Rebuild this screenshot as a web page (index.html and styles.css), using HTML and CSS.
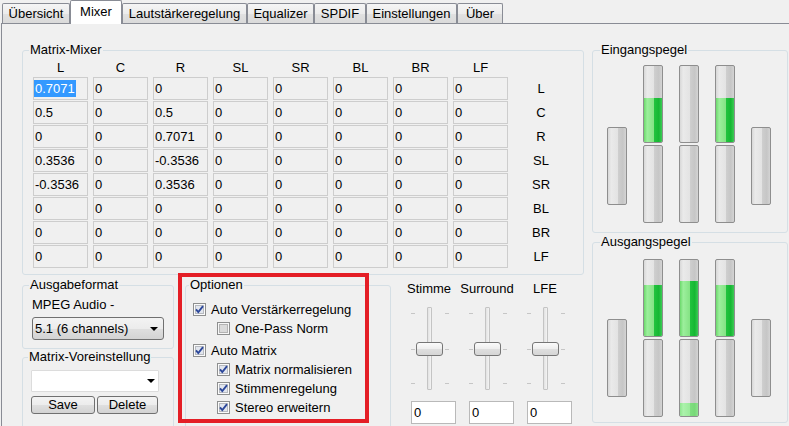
FILE: index.html
```html
<!DOCTYPE html>
<html lang="de">
<head>
<meta charset="utf-8">
<title>Mixer</title>
<link rel="stylesheet" href="styles.css">
</head>
<body>
<div class="tabs">
  <div class="tab">Übersicht</div>
  <div class="tab active">Mixer</div>
  <div class="tab">Lautstärkeregelung</div>
  <div class="tab">Equalizer</div>
  <div class="tab">SPDIF</div>
  <div class="tab">Einstellungen</div>
  <div class="tab">Über</div>
</div>
<div class="page">
  <div class="left">
    <fieldset class="group mixer">
      <legend>Matrix-Mixer</legend>
      <div class="matrix">
        <div class="hd">L</div><div class="hd">C</div><div class="hd">R</div><div class="hd">SL</div><div class="hd">SR</div><div class="hd">BL</div><div class="hd">BR</div><div class="hd">LF</div><div class="hd"></div>

        <div class="cell"><span class="sel">0.7071</span></div><div class="cell">0</div><div class="cell">0</div><div class="cell">0</div><div class="cell">0</div><div class="cell">0</div><div class="cell">0</div><div class="cell">0</div><div class="rl">L</div>
        <div class="cell">0.5</div><div class="cell">0</div><div class="cell">0.5</div><div class="cell">0</div><div class="cell">0</div><div class="cell">0</div><div class="cell">0</div><div class="cell">0</div><div class="rl">C</div>
        <div class="cell">0</div><div class="cell">0</div><div class="cell">0.7071</div><div class="cell">0</div><div class="cell">0</div><div class="cell">0</div><div class="cell">0</div><div class="cell">0</div><div class="rl">R</div>
        <div class="cell">0.3536</div><div class="cell">0</div><div class="cell">-0.3536</div><div class="cell">0</div><div class="cell">0</div><div class="cell">0</div><div class="cell">0</div><div class="cell">0</div><div class="rl">SL</div>
        <div class="cell">-0.3536</div><div class="cell">0</div><div class="cell">0.3536</div><div class="cell">0</div><div class="cell">0</div><div class="cell">0</div><div class="cell">0</div><div class="cell">0</div><div class="rl">SR</div>
        <div class="cell">0</div><div class="cell">0</div><div class="cell">0</div><div class="cell">0</div><div class="cell">0</div><div class="cell">0</div><div class="cell">0</div><div class="cell">0</div><div class="rl">BL</div>
        <div class="cell">0</div><div class="cell">0</div><div class="cell">0</div><div class="cell">0</div><div class="cell">0</div><div class="cell">0</div><div class="cell">0</div><div class="cell">0</div><div class="rl">BR</div>
        <div class="cell">0</div><div class="cell">0</div><div class="cell">0</div><div class="cell">0</div><div class="cell">0</div><div class="cell">0</div><div class="cell">0</div><div class="cell">0</div><div class="rl">LF</div>
      </div>
    </fieldset>

    <div class="lower">
      <div class="col-a">
        <fieldset class="group fmt">
          <legend>Ausgabeformat</legend>
          <div class="mpeg">MPEG Audio -</div>
          <div class="combo">
            <span>5.1 (6 channels)</span>
            <svg class="arrow" width="8" height="4" viewBox="0 0 8 4"><polygon points="0,0 8,0 4,4" fill="#000"/></svg>
          </div>
        </fieldset>
        <fieldset class="group preset">
          <legend>Matrix-Voreinstellung</legend>
          <div class="combo white">
            <span></span>
            <svg class="arrow" width="8" height="4" viewBox="0 0 8 4"><polygon points="0,0 8,0 4,4" fill="#000"/></svg>
          </div>
          <div class="btns">
            <div class="btn save">Save</div>
            <div class="btn del">Delete</div>
          </div>
        </fieldset>
      </div>

      <fieldset class="group opts">
        <legend>Optionen</legend>
        <div class="chk">
          <svg class="cb" width="13" height="13" viewBox="0 0 13 13"><rect x=".5" y=".5" width="12" height="12" fill="#fbfbfb" stroke="#8e8f8f"/><rect x="2.5" y="2.5" width="8" height="8" fill="#e2e6ee" stroke="#b7bac0"/><path d="M3 6.3 L5.3 9 L10 3.2" fill="none" stroke="#2c479a" stroke-width="1.9"/></svg>
          <span>Auto Verstärkerregelung</span>
        </div>
        <div class="chk sub">
          <svg class="cb" width="13" height="13" viewBox="0 0 13 13"><rect x=".5" y=".5" width="12" height="12" fill="#f7f7f7" stroke="#8e8f8f"/><rect x="2.5" y="2.5" width="8" height="8" fill="#dadada" stroke="#b3b3b3"/></svg>
          <span>One-Pass Norm</span>
        </div>
        <div class="chk gap">
          <svg class="cb" width="13" height="13" viewBox="0 0 13 13"><rect x=".5" y=".5" width="12" height="12" fill="#fbfbfb" stroke="#8e8f8f"/><rect x="2.5" y="2.5" width="8" height="8" fill="#e2e6ee" stroke="#b7bac0"/><path d="M3 6.3 L5.3 9 L10 3.2" fill="none" stroke="#2c479a" stroke-width="1.9"/></svg>
          <span>Auto Matrix</span>
        </div>
        <div class="chk sub">
          <svg class="cb" width="13" height="13" viewBox="0 0 13 13"><rect x=".5" y=".5" width="12" height="12" fill="#fbfbfb" stroke="#8e8f8f"/><rect x="2.5" y="2.5" width="8" height="8" fill="#e2e6ee" stroke="#b7bac0"/><path d="M3 6.3 L5.3 9 L10 3.2" fill="none" stroke="#2c479a" stroke-width="1.9"/></svg>
          <span>Matrix normalisieren</span>
        </div>
        <div class="chk sub">
          <svg class="cb" width="13" height="13" viewBox="0 0 13 13"><rect x=".5" y=".5" width="12" height="12" fill="#fbfbfb" stroke="#8e8f8f"/><rect x="2.5" y="2.5" width="8" height="8" fill="#e2e6ee" stroke="#b7bac0"/><path d="M3 6.3 L5.3 9 L10 3.2" fill="none" stroke="#2c479a" stroke-width="1.9"/></svg>
          <span>Stimmenregelung</span>
        </div>
        <div class="chk sub">
          <svg class="cb" width="13" height="13" viewBox="0 0 13 13"><rect x=".5" y=".5" width="12" height="12" fill="#fbfbfb" stroke="#8e8f8f"/><rect x="2.5" y="2.5" width="8" height="8" fill="#e2e6ee" stroke="#b7bac0"/><path d="M3 6.3 L5.3 9 L10 3.2" fill="none" stroke="#2c479a" stroke-width="1.9"/></svg>
          <span>Stereo erweitern</span>
        </div>
      </fieldset>

      <div class="sliders">
        <div class="sl">
          <div class="sl-label">Stimme</div>
          <div class="slider">
            <div class="track"></div>
            <div class="tick l t1"></div><div class="tick l t2"></div><div class="tick l t3"></div>
            <div class="tick r t1"></div><div class="tick r t2"></div><div class="tick r t3"></div>
            <div class="thumb"></div>
          </div>
          <div class="val">0</div>
        </div>
        <div class="sl">
          <div class="sl-label">Surround</div>
          <div class="slider">
            <div class="track"></div>
            <div class="tick l t1"></div><div class="tick l t2"></div><div class="tick l t3"></div>
            <div class="tick r t1"></div><div class="tick r t2"></div><div class="tick r t3"></div>
            <div class="thumb"></div>
          </div>
          <div class="val">0</div>
        </div>
        <div class="sl">
          <div class="sl-label">LFE</div>
          <div class="slider">
            <div class="track"></div>
            <div class="tick l t1"></div><div class="tick l t2"></div><div class="tick l t3"></div>
            <div class="tick r t1"></div><div class="tick r t2"></div><div class="tick r t3"></div>
            <div class="thumb"></div>
          </div>
          <div class="val">0</div>
        </div>
      </div>

      <div class="annot"></div>
    </div>
  </div>

  <div class="right">
    <fieldset class="group meters in">
      <legend>Eingangspegel</legend>
      <div class="mrow">
        <div class="seg side"></div>
        <div class="stack">
          <div class="seg"><div class="fill" style="height:58%"></div></div>
          <div class="seg"></div>
        </div>
        <div class="stack">
          <div class="seg"></div>
          <div class="seg"></div>
        </div>
        <div class="stack">
          <div class="seg"><div class="fill" style="height:58%"></div></div>
          <div class="seg"></div>
        </div>
        <div class="seg side"></div>
      </div>
    </fieldset>
    <fieldset class="group meters out">
      <legend>Ausgangspegel</legend>
      <div class="mrow">
        <div class="seg side"></div>
        <div class="stack">
          <div class="seg"><div class="fill" style="height:67%"></div></div>
          <div class="seg"></div>
        </div>
        <div class="stack">
          <div class="seg"><div class="fill" style="height:73%"></div></div>
          <div class="seg"><div class="fill light" style="height:17%"></div></div>
        </div>
        <div class="stack">
          <div class="seg"><div class="fill" style="height:67%"></div></div>
          <div class="seg"></div>
        </div>
        <div class="seg side"></div>
      </div>
    </fieldset>
  </div>
</div>
</body>
</html>
```

FILE: styles.css
```css
* { box-sizing: border-box; }
html, body { margin: 0; padding: 0; }
body {
  width: 789px;
  height: 426px;
  overflow: hidden;
  background: #f0f0f0;
  color: #000;
  font-family: "Liberation Sans", Arial, sans-serif;
  font-size: 13px;
  line-height: 16px;
}

/* ---------- tabs ---------- */
.tabs {
  display: flex;
  align-items: flex-end;
  height: 23px;
  padding-left: 2px;
}
.tab {
  height: 20px;
  border: 1px solid #898c95;
  border-bottom: none;
  border-radius: 2px 2px 0 0;
  background: linear-gradient(#f5f5f5, #ececec 50%, #e1e1e1 51%, #dadada);
  text-align: center;
  line-height: 19px;
  white-space: nowrap;
}
.tab:nth-child(1) { width: 68px; }
.tab:nth-child(2) { width: 52px; }
.tab:nth-child(3) { width: 125px; }
.tab:nth-child(4) { width: 67px; }
.tab:nth-child(5) { width: 52px; }
.tab:nth-child(6) { width: 91px; }
.tab:nth-child(7) { width: 46px; }
.tab.active {
  height: 24px;
  margin-bottom: -1px;
  position: relative;
  z-index: 1;
  background: #fff;
  line-height: 21px;
  padding-bottom: 2px;
}

/* ---------- page ---------- */
.page {
  margin-left: 1px;
  width: 790px;
  height: 410px;
  border: 1px solid #898c95;
  padding: 18px 0 0 20px;
  display: grid;
  grid-template-columns: 562px 196px;
  column-gap: 8px;
  align-items: start;
}

fieldset.group {
  margin: 0;
  border: 1px solid #d5dfe5;
  border-radius: 3px;
  min-inline-size: 0;
}
fieldset.group > legend {
  padding: 0 1px;
  line-height: 16px;
}

/* ---------- matrix ---------- */
.mixer {
  width: 562px;
  padding: 1px 14px 6px 10px;
}
.mixer > legend { margin-left: -4px; }
.matrix {
  display: grid;
  grid-template-columns: repeat(8, 55px) 56px;
  grid-template-rows: 17px repeat(8, 23px);
  column-gap: 5px;
  row-gap: 1px;
}
.hd {
  text-align: center;
  line-height: 17px;
}
.cell {
  border: 1px solid #cdcdcd;
  padding-left: 1px;
  line-height: 21px;
  white-space: nowrap;
  overflow: hidden;
}
.sel {
  display: inline-block;
  margin-left: -1px;
  padding: 0 1px;
  line-height: 17px;
  background: #3399ff;
  color: #fff;
}
.rl {
  text-align: center;
  line-height: 23px;
}

/* ---------- lower row ---------- */
.lower {
  position: relative;
  display: flex;
  align-items: flex-start;
  margin-top: 2px;
}
.col-a {
  width: 152px;
  margin-right: 11px;
}
.fmt {
  padding: 4px 9px 8px 9px;
}
.fmt > legend { margin-left: -3px; }
.mpeg { line-height: 16px; }
.combo {
  margin-top: 4px;
  width: 132px;
  height: 23px;
  display: flex;
  align-items: center;
  justify-content: space-between;
  padding: 0 5px 0 2px;
  border: 1px solid #707070;
  border-radius: 3px;
  background: linear-gradient(#f3f3f3, #ececec 50%, #dfdfdf 51%, #d3d3d3);
  white-space: nowrap;
}
.preset {
  margin-top: 2px;
  padding: 5px 12px 14px 8px;
}
.preset > legend { margin-left: -3px; }
.combo.white {
  margin-top: 0;
  width: 128px;
  height: 22px;
  padding-right: 3px;
  border: 1px solid #dcdcdc;
  border-radius: 1px;
  background: #fff;
}
.btns {
  display: flex;
  gap: 2px;
  margin-top: 4px;
}
.btn {
  height: 18px;
  border: 1px solid #707070;
  border-radius: 3px;
  background: linear-gradient(#f3f3f3, #ececec 50%, #dfdfdf 51%, #d3d3d3);
  text-align: center;
  line-height: 16px;
}
.btn.save { width: 64px; }
.btn.del { width: 61px; }

/* ---------- options ---------- */
.opts {
  width: 206px;
  padding: 7px 4px 20px 7px;
}
.opts > legend { margin-left: -4px; }
.chk {
  display: flex;
  align-items: center;
  height: 19px;
  white-space: nowrap;
}
.chk.sub { padding-left: 24px; }
.chk.gap { margin-top: 3px; }
.cb {
  flex: none;
  margin-right: 5px;
}

/* ---------- sliders ---------- */
.sliders {
  width: 193px;
  display: flex;
  padding: 4px 0 0 9px;
}
.sl {
  width: 58px;
  display: flex;
  flex-direction: column;
}
.sl-label {
  text-align: center;
  line-height: 16px;
  white-space: nowrap;
}
.slider {
  position: relative;
  width: 58px;
  height: 94px;
  margin-top: 5px;
}
.track {
  position: absolute;
  left: 27px;
  top: 5px;
  width: 5px;
  height: 83px;
  border: 1px solid #c4c4c4;
  border-radius: 1px;
  background: linear-gradient(to right, #e2e2e2, #f4f4f4);
}
.tick {
  position: absolute;
  width: 4px;
  height: 1px;
  background: #c6c6c6;
}
.tick.l { left: 11px; }
.tick.r { left: 45px; }
.tick.t1 { top: 11px; }
.tick.t2 { top: 47px; }
.tick.t3 { top: 81px; }
.thumb {
  position: absolute;
  left: 16px;
  top: 40px;
  width: 27px;
  height: 14px;
  border: 1px solid #767676;
  border-radius: 3px;
  background: linear-gradient(#fbfbfb, #eeeeee 50%, #dfdfdf 51%, #d6d6d6);
}
.val {
  margin-top: 5px;
  margin-left: 11px;
  width: 45px;
  height: 23px;
  padding-left: 2px;
  border: 1px solid #b9b9b9;
  background: #fff;
  line-height: 21px;
}

.annot {
  position: absolute;
  left: 156px;
  top: -4px;
  width: 191px;
  height: 150px;
  border: 4px solid #e41e26;
  pointer-events: none;
}

/* ---------- meters ---------- */
.meters {
  width: 196px;
  padding: 7px 0 9px 14px;
}
.meters > legend { margin-left: -7px; }
.meters.out {
  margin-top: 1px;
  padding: 9px 0 5px 14px;
}
.mrow {
  display: flex;
  align-items: flex-start;
  gap: 16px;
}
.stack {
  display: flex;
  flex-direction: column;
  gap: 2px;
}
.seg {
  width: 20px;
  height: 78px;
  border: 1px solid #8e8e8e;
  border-radius: 2px;
  overflow: hidden;
  display: flex;
  flex-direction: column;
  justify-content: flex-end;
  background: linear-gradient(to right, #d8d8d8 0%, #eaeaea 18%, #e3e3e3 55%, #cecece 58%, #c6c6c6 82%, #d4d4d4 100%);
}
.in .seg.side { margin-top: 62px; }
.out .seg.side { margin-top: 60px; }
.fill {
  flex: none;
  background: linear-gradient(to right, #6cd96c 0%, #9cef9c 18%, #85e385 54%, #22c33e 57%, #16b733 82%, #3dcb56 100%);
}
.fill.light {
  background: linear-gradient(to right, #8fe68f 0%, #acf2ac 18%, #9beb9b 54%, #80de80 57%, #78d878 82%, #8fe38f 100%);
}
```
